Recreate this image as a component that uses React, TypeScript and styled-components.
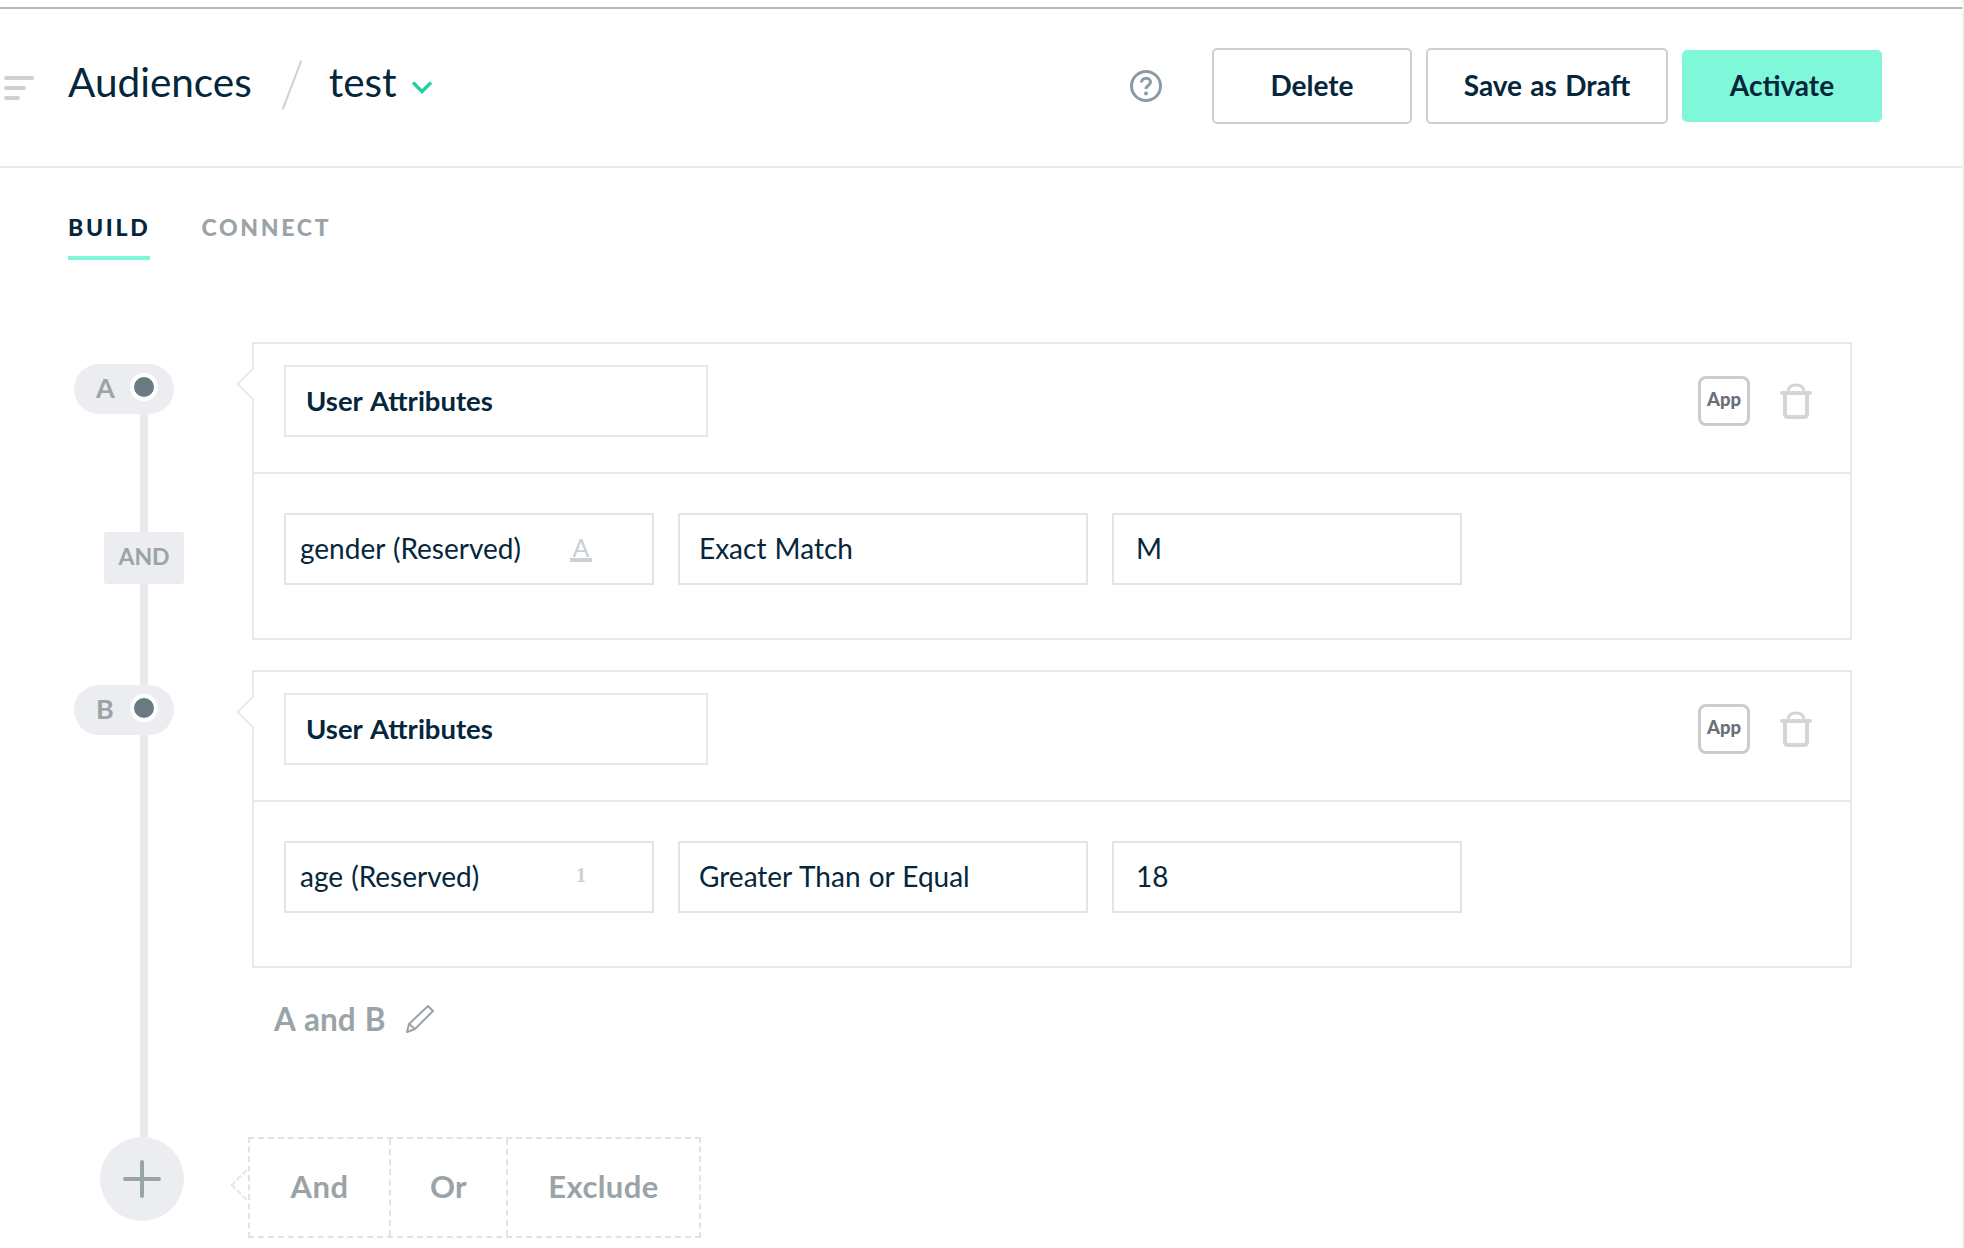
import styled, { createGlobalStyle } from 'styled-components';

const GlobalStyle = createGlobalStyle`
  html, body {
    margin: 0;
    padding: 0;
    background: #fff;
  }
  body {
    font-family: 'Lato', 'Open Sans', sans-serif;
    color: #05263b;
  }
  * {
    box-sizing: border-box;
  }
`;

const conditions = [
  {
    label: 'A',
    attr: 'gender (Reserved)',
    type: 'string',
    operator: 'Exact Match',
    value: 'M',
  },
  {
    label: 'B',
    attr: 'age (Reserved)',
    type: 'number',
    operator: 'Greater Than or Equal',
    value: '18',
  },
];

const MenuIcon = () => (
  <MenuSvg width="30" height="26" viewBox="0 0 30 26">
    <g stroke="#cdd1d4" strokeWidth="4" strokeLinecap="round">
      <path d="M2 2h26" />
      <path d="M2 12h18" />
      <path d="M2 22h12" />
    </g>
  </MenuSvg>
);

const ChevronIcon = () => (
  <svg width="22" height="14" viewBox="0 0 22 14" fill="none">
    <path d="M2 2.5l9 9 9-9" stroke="#1cd3a0" strokeWidth="3.4" />
  </svg>
);

const HelpIcon = () => (
  <svg width="32" height="32" viewBox="0 0 32 32" fill="none">
    <circle cx="16" cy="16" r="14.5" stroke="#8a9ba5" strokeWidth="3" />
    <path
      d="M11.5 12.5c0-2.6 2-4.3 4.6-4.3s4.4 1.6 4.4 3.9c0 3.4-4.5 3.4-4.5 7"
      stroke="#8a9ba5"
      strokeWidth="3"
    />
    <circle cx="16" cy="23.5" r="2" fill="#8a9ba5" />
  </svg>
);

const TrashIcon = () => (
  <svg width="32" height="36" viewBox="0 0 32 36" fill="none">
    <g stroke="#d3d6d9" strokeWidth="4">
      <path d="M2 10h28" strokeLinecap="round" />
      <path d="M8 9c0-4 2-7 8-7s8 3 8 7" strokeWidth="3" />
      <path d="M5 12v19c0 2 1 3 3 3h16c2 0 3-1 3-3V12" />
    </g>
  </svg>
);

const PencilIcon = () => (
  <svg width="30" height="30" viewBox="0 0 30 30" fill="none">
    <g stroke="#9aa4a8" strokeWidth="2" strokeLinejoin="round">
      <path d="M23 2l5 5L10 25l-8 3 2-8z" />
      <path d="M4 20l6 5" />
    </g>
  </svg>
);

const PlusIcon = () => (
  <svg width="38" height="38" viewBox="0 0 38 38" fill="none">
    <path
      d="M19 2v34M2 19h34"
      stroke="#98a4a8"
      strokeWidth="4"
      strokeLinecap="round"
    />
  </svg>
);

const App = () => {
  return (
    <Page>
      <GlobalStyle />
      <Header>
        <MenuIcon />
        <Title>Audiences</Title>
        <Slash />
        <Title>test</Title>
        <ChevronWrapper>
          <ChevronIcon />
        </ChevronWrapper>
        <HeaderActions>
          <HelpWrapper>
            <HelpIcon />
          </HelpWrapper>
          <HeaderButton $width={200}>Delete</HeaderButton>
          <HeaderButton $width={242}>Save as Draft</HeaderButton>
          <ActivateButton>Activate</ActivateButton>
        </HeaderActions>
      </Header>

      <TabBar>
        <Tab $active>BUILD</Tab>
        <Tab>CONNECT</Tab>
      </TabBar>

      <Builder>
        <Rail>
          <GroupPill>
            <span>A</span>
            <PillDot />
          </GroupPill>
          <Connector $height={118} />
          <AndTag>AND</AndTag>
          <Connector $height={101} />
          <GroupPill>
            <span>B</span>
            <PillDot />
          </GroupPill>
          <Connector $height={402} />
          <AddButton>
            <PlusIcon />
          </AddButton>
        </Rail>

        <Content>
          <CardList>
            {conditions.map((item) => (
              <Card key={item.label}>
                <CardTop>
                  <SourceSelect>User Attributes</SourceSelect>
                  <CardActions>
                    <AppBadge>App</AppBadge>
                    <TrashIcon />
                  </CardActions>
                </CardTop>
                <CardBody>
                  <Field $width={370} $pad={14}>
                    <span>{item.attr}</span>
                    {item.type === 'string' ? (
                      <StringType>A</StringType>
                    ) : (
                      <NumberType>1</NumberType>
                    )}
                  </Field>
                  <Field $width={410} $pad={19}>
                    {item.operator}
                  </Field>
                  <Field $width={350} $pad={22}>
                    {item.value}
                  </Field>
                </CardBody>
              </Card>
            ))}
          </CardList>

          <Expression>
            <span>A and B</span>
            <PencilIcon />
          </Expression>

          <AddOptions>
            <AddOption $width={139}>And</AddOption>
            <AddOption $width={117}>Or</AddOption>
            <AddOption $width={193}>Exclude</AddOption>
          </AddOptions>
        </Content>
      </Builder>
    </Page>
  );
};

const Page = styled.div`
  width: 1964px;
  height: 1248px;
  padding-top: 7px;
  overflow: hidden;
  border-right: 2px solid #f1f2f3;
`;

const Header = styled.header`
  display: flex;
  align-items: center;
  height: 161px;
  padding: 0 80px 4px 4px;
  border-top: 2px solid #b5b7b8;
  border-bottom: 2px solid #e8e9ea;
`;

const MenuSvg = styled.svg`
  margin: 6px 34px 0 0;
`;

const Title = styled.h1`
  margin: 0;
  padding-bottom: 7px;
  font-size: 40.5px;
  font-weight: 400;
  line-height: 48px;
  color: #05263b;
`;

const Slash = styled.div`
  width: 2px;
  height: 52px;
  margin: 0 36px 2px 39px;
  background: #cfd1d3;
  transform: rotate(21deg);
`;

const ChevronWrapper = styled.div`
  display: flex;
  margin: 2px 0 0 14px;
`;

const HeaderActions = styled.div`
  display: flex;
  align-items: center;
  gap: 14px;
  margin-left: auto;
`;

const HelpWrapper = styled.div`
  display: flex;
  margin-right: 36px;
`;

const HeaderButton = styled.button<{ $width: number }>`
  width: ${({ $width }) => $width}px;
  height: 76px;
  padding-bottom: 3px;
  border: 2px solid #ccd0d4;
  border-radius: 5px;
  background: #fff;
  font-family: inherit;
  font-size: 28px;
  font-weight: 700;
  word-spacing: 1.5px;
  color: #05263b;
`;

const ActivateButton = styled.button`
  width: 200px;
  height: 72px;
  padding-bottom: 3px;
  border: 0;
  border-radius: 5px;
  background: #7ff8d9;
  font-family: inherit;
  font-size: 28px;
  font-weight: 700;
  color: #05263b;
`;

const TabBar = styled.nav`
  display: flex;
  gap: 51px;
  margin-top: 46px;
  padding-left: 68px;
`;

const Tab = styled.div<{ $active?: boolean }>`
  height: 46px;
  padding-bottom: 16px;
  border-bottom: 4px solid ${({ $active }) => ($active ? '#7ff8d9' : 'transparent')};
  font-size: 23px;
  font-weight: 900;
  line-height: 26px;
  letter-spacing: 2.7px;
  color: ${({ $active }) => ($active ? '#05263b' : '#9aa4a8')};
`;

const Builder = styled.main`
  display: flex;
  margin-top: 82px;
  padding-left: 74px;
`;

const Rail = styled.div`
  display: flex;
  flex-direction: column;
  align-items: flex-start;
  flex: none;
  width: 178px;
  padding-top: 22px;
`;

const GroupPill = styled.div`
  display: flex;
  align-items: center;
  justify-content: space-between;
  width: 100px;
  height: 50px;
  padding: 0 16px 4px 22px;
  border-radius: 25px;
  background: #ebedf0;
  font-size: 27px;
  font-weight: 700;
  color: #9aa4a8;
`;

const PillDot = styled.div`
  width: 28px;
  height: 28px;
  border: 4px solid #fff;
  border-radius: 50%;
  background: #6a7a82;
`;

const Connector = styled.div<{ $height: number }>`
  width: 8px;
  height: ${({ $height }) => $height}px;
  margin-left: 66px;
  background: #e9eaec;
`;

const AndTag = styled.div`
  display: flex;
  align-items: center;
  justify-content: center;
  width: 80px;
  height: 52px;
  margin-left: 30px;
  padding-bottom: 5px;
  border-radius: 3px;
  background: #ebedf0;
  font-size: 23px;
  font-weight: 700;
  color: #9aa4a8;
`;

const AddButton = styled.div`
  display: flex;
  align-items: center;
  justify-content: center;
  width: 84px;
  height: 84px;
  margin-left: 26px;
  border-radius: 50%;
  background: #ebedf0;
`;

const Content = styled.div`
  display: flex;
  flex-direction: column;
  width: 1600px;
`;

const CardList = styled.div`
  display: flex;
  flex-direction: column;
  gap: 30px;
`;

const Card = styled.section`
  position: relative;
  height: 298px;
  border: 2px solid #e8e9ea;

  &::before {
    content: '';
    position: absolute;
    top: 28px;
    left: -13px;
    width: 22px;
    height: 22px;
    border-left: 2px solid #e8e9ea;
    border-bottom: 2px solid #e8e9ea;
    background: #fff;
    transform: rotate(45deg);
  }
`;

const CardTop = styled.div`
  display: flex;
  align-items: center;
  justify-content: space-between;
  height: 130px;
  padding: 21px 38px 35px 30px;
  border-bottom: 2px solid #e8e9ea;
`;

const SourceSelect = styled.div`
  display: flex;
  align-items: center;
  width: 424px;
  height: 72px;
  padding: 0 0 2px 20px;
  border: 2px solid #e6e7e8;
  font-size: 27.5px;
  font-weight: 700;
  word-spacing: 2px;
`;

const CardActions = styled.div`
  display: flex;
  align-items: center;
  gap: 30px;
`;

const AppBadge = styled.div`
  display: flex;
  align-items: center;
  justify-content: center;
  width: 52px;
  height: 50px;
  padding-bottom: 4px;
  border: 3px solid #cccccc;
  border-radius: 8px;
  font-size: 18.5px;
  font-weight: 900;
  color: #6b6f78;
`;

const CardBody = styled.div`
  display: flex;
  gap: 24px;
  padding: 39px 30px 0;
`;

const Field = styled.div<{ $width: number; $pad: number }>`
  position: relative;
  display: flex;
  align-items: center;
  width: ${({ $width }) => $width}px;
  height: 72px;
  padding: 0 0 2px ${({ $pad }) => $pad}px;
  border: 2px solid #e3e4e5;
  font-size: 28px;
  word-spacing: 1px;
  color: #05263b;
`;

const StringType = styled.span`
  position: absolute;
  top: 21px;
  left: 284px;
  width: 22px;
  height: 26px;
  border-bottom: 4px solid #ccd0d4;
  font-size: 25px;
  font-weight: 400;
  line-height: 22px;
  text-align: center;
  color: #ccd0d4;
`;

const NumberType = styled.span`
  position: absolute;
  top: 22px;
  left: 290px;
  font-family: 'Liberation Serif', serif;
  font-size: 20px;
  font-weight: 700;
  line-height: 20px;
  color: #ccd0d4;
`;

const Expression = styled.div`
  display: flex;
  align-items: center;
  gap: 19px;
  height: 36px;
  margin-top: 33px;
  padding-left: 22px;
  font-size: 31.5px;
  font-weight: 700;
  word-spacing: 1.5px;
  color: #9aa4a8;
`;

const AddOptions = styled.div`
  position: relative;
  display: flex;
  align-self: flex-start;
  height: 101px;
  margin: 100px 0 0 -4px;
  border: 2px dashed #e0e2e3;

  &::before {
    content: '';
    position: absolute;
    top: 35px;
    left: -15px;
    width: 20px;
    height: 20px;
    border-left: 2px dashed #e6e7e8;
    border-bottom: 2px dashed #e6e7e8;
    transform: rotate(45deg);
  }
`;

const AddOption = styled.div<{ $width: number }>`
  display: flex;
  align-items: center;
  justify-content: center;
  width: ${({ $width }) => $width}px;
  padding-bottom: 4px;
  font-size: 31px;
  font-weight: 700;
  letter-spacing: 0.4px;
  color: #9aa4a8;

  & + & {
    border-left: 2px dashed #e0e2e3;
  }
`;

export default App;
